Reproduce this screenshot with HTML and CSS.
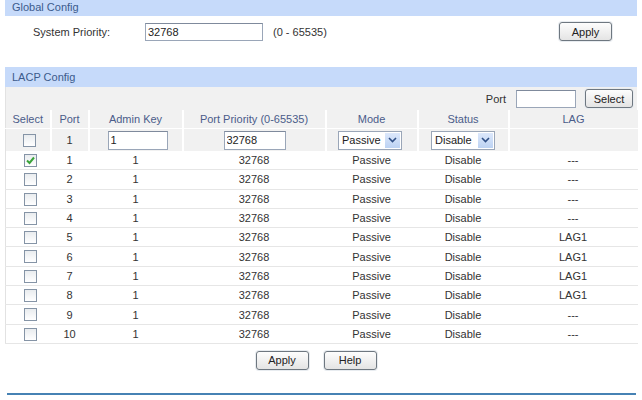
FILE: index.html
```html
<!DOCTYPE html>
<html>
<head>
<meta charset="utf-8">
<link rel="stylesheet" href="styles.css">
</head>
<body>
<div class="page">
  <div class="section-head head-global">Global Config</div>
  <div class="global-row">
    <span class="gl-label">System Priority:</span>
    <input class="txt gl-input" type="text" value="32768">
    <span class="gl-range">(0 - 65535)</span>
    <span class="spacer"></span>
    <button class="btn btn-global">Apply</button>
  </div>

  <div class="section-head head-lacp">LACP Config</div>
  <div class="port-bar">
    <span class="port-label">Port</span>
    <input class="txt port-input" type="text" value="">
    <button class="btn btn-select">Select</button>
  </div>
  <table class="grid">
    <colgroup>
      <col class="c-sel"><col class="c-port"><col class="c-key"><col class="c-pri"><col class="c-mode"><col class="c-status"><col class="c-lag">
    </colgroup>
    <thead>
      <tr class="hdr">
        <th>Select</th><th>Port</th><th>Admin Key</th><th>Port Priority (0-65535)</th><th>Mode</th><th>Status</th><th>LAG</th>
      </tr>
      <tr class="edit">
        <td class="cb-cell"><span class="cb"></span></td>
        <td>1</td>
        <td><input class="txt key-input" type="text" value="1"></td>
        <td><input class="txt pri-input" type="text" value="32768"></td>
        <td><span class="sel sel-mode"><span class="sel-text">Passive</span><span class="sel-arrow"><svg width="9" height="6" viewBox="0 0 9 6"><path d="M1 1 L4.5 4.5 L8 1" fill="none" stroke="#2f4f86" stroke-width="1.6"/></svg></span></span></td>
        <td><span class="sel sel-status"><span class="sel-text">Disable</span><span class="sel-arrow"><svg width="9" height="6" viewBox="0 0 9 6"><path d="M1 1 L4.5 4.5 L8 1" fill="none" stroke="#2f4f86" stroke-width="1.6"/></svg></span></span></td>
        <td></td>
      </tr>
    </thead>
    <tbody>
      <tr><td class="cb-cell"><span class="cb checked"><svg width="11" height="11" viewBox="0 0 11 11"><path d="M2 5.5 L4.5 8 L9 2.5" fill="none" stroke="#3aa33a" stroke-width="2"/></svg></span></td><td>1</td><td>1</td><td>32768</td><td>Passive</td><td>Disable</td><td>---</td></tr>
      <tr><td class="cb-cell"><span class="cb"></span></td><td>2</td><td>1</td><td>32768</td><td>Passive</td><td>Disable</td><td>---</td></tr>
      <tr><td class="cb-cell"><span class="cb"></span></td><td>3</td><td>1</td><td>32768</td><td>Passive</td><td>Disable</td><td>---</td></tr>
      <tr><td class="cb-cell"><span class="cb"></span></td><td>4</td><td>1</td><td>32768</td><td>Passive</td><td>Disable</td><td>---</td></tr>
      <tr><td class="cb-cell"><span class="cb"></span></td><td>5</td><td>1</td><td>32768</td><td>Passive</td><td>Disable</td><td>LAG1</td></tr>
      <tr><td class="cb-cell"><span class="cb"></span></td><td>6</td><td>1</td><td>32768</td><td>Passive</td><td>Disable</td><td>LAG1</td></tr>
      <tr><td class="cb-cell"><span class="cb"></span></td><td>7</td><td>1</td><td>32768</td><td>Passive</td><td>Disable</td><td>LAG1</td></tr>
      <tr><td class="cb-cell"><span class="cb"></span></td><td>8</td><td>1</td><td>32768</td><td>Passive</td><td>Disable</td><td>LAG1</td></tr>
      <tr><td class="cb-cell"><span class="cb"></span></td><td>9</td><td>1</td><td>32768</td><td>Passive</td><td>Disable</td><td>---</td></tr>
      <tr><td class="cb-cell"><span class="cb"></span></td><td>10</td><td>1</td><td>32768</td><td>Passive</td><td>Disable</td><td>---</td></tr>
    </tbody>
  </table>
  <div class="actions">
    <button class="btn btn-act">Apply</button>
    <button class="btn btn-act">Help</button>
  </div>
  <div class="bottom-line"></div>
</div>
</body>
</html>
```

FILE: styles.css
```css
html, body {
  margin: 0;
  padding: 0;
  background: #ffffff;
}
body {
  font-family: "Liberation Sans", Arial, sans-serif;
  font-size: 11px;
  color: #333333;
}
.page {
  width: 632px;
  margin-left: 5px;
}
.section-head {
  background: #c6dafa;
  color: #3c5a8c;
  padding-left: 7px;
  font-size: 11px;
}
.head-global {
  height: 16px;
  line-height: 14px;
}
.head-lacp {
  height: 20px;
  line-height: 20px;
  margin-top: 20px;
}
.global-row {
  display: flex;
  align-items: center;
  height: 31px;
}
.gl-label {
  width: 112px;
  padding-left: 28px;
  color: #333;
}
.txt {
  font-family: "Liberation Sans", Arial, sans-serif;
  font-size: 11px;
  color: #222;
  border: 1px solid #9aa6b8;
  border-top-color: #7f8a9c;
  background: #fff;
  padding: 0 2px;
  margin: 0;
  box-sizing: border-box;
  outline: none;
}
.gl-input {
  width: 118px;
  height: 18px;
}
.gl-range {
  margin-left: 10px;
}
.spacer {
  flex: 1;
}
.btn {
  font-family: "Liberation Sans", Arial, sans-serif;
  font-size: 11px;
  color: #222;
  border: 1px solid #6e7780;
  border-radius: 3px;
  background: linear-gradient(#fdfdfd, #e4e4e4);
  padding: 0;
  margin: 0;
  box-sizing: border-box;
  height: 19px;
  box-shadow: 0 0 0 1px #e8ecf0;
}
.btn-global {
  width: 53px;
  margin-right: 25px;
}
.port-bar {
  display: flex;
  align-items: center;
  justify-content: flex-end;
  height: 23px;
  background: #f1f1f1;
  border-left: 1px solid #e2e2e2;
  padding-right: 4px;
}
.port-label {
  margin-right: 10px;
  color: #333;
}
.port-input {
  width: 60px;
  height: 18px;
  margin-right: 9px;
}
.btn-select {
  width: 48px;
  height: 19px;
}
.grid {
  width: 632px;
  border-collapse: collapse;
  table-layout: fixed;
  border-left: 1px solid #e2e2e2;
}
.c-sel { width: 45px; }
.c-port { width: 38px; }
.c-key { width: 94px; }
.c-pri { width: 143px; }
.c-mode { width: 92px; }
.c-status { width: 91px; }
.c-lag { width: 129px; }
.grid th, .grid td {
  text-align: center;
  padding: 0;
  font-size: 11px;
}
.grid td.cb-cell {
  padding-left: 4px;
}
.hdr th {
  font-weight: normal;
  color: #4b5c8a;
  background: #f1f1f1;
  height: 18px;
  border-left: 2px solid #ffffff;
  border-bottom: 1px solid #ffffff;
}
.hdr th:first-child, .edit td:first-child {
  border-left: none;
}
.edit td {
  background: #f1f1f1;
  height: 22px;
  border-left: 2px solid #ffffff;
  color: #333;
}
.grid tbody td {
  height: 18.3px;
  border-bottom: 1px solid #e6e6e6;
  background: #fff;
  color: #333;
}
.key-input {
  width: 60px;
  height: 19px;
  display: block;
  margin-left: 18px;
}
.pri-input {
  width: 62px;
  height: 19px;
  display: block;
  margin-left: 40px;
}
.cb {
  display: inline-block;
  width: 13px;
  height: 13px;
  box-sizing: border-box;
  border: 1px solid #8594a6;
  background: linear-gradient(#e9ecef, #ffffff);
  vertical-align: middle;
  position: relative;
}
.cb svg {
  position: absolute;
  left: 0;
  top: 0;
}
.sel {
  display: inline-flex;
  align-items: center;
  height: 19px;
  box-sizing: border-box;
  border: 1px solid #9aa6b8;
  background: #fff;
  vertical-align: middle;
  text-align: left;
}
.sel-mode { width: 64px; margin-right: 3px; }
.sel-status { width: 64px; }
.sel-text {
  flex: 1;
  padding-left: 3px;
  color: #222;
}
.sel-arrow {
  width: 15px;
  height: 15px;
  margin-right: 1px;
  background: linear-gradient(#dce8fb, #bcd2f3);
  display: flex;
  align-items: center;
  justify-content: center;
}
.actions {
  display: flex;
  justify-content: center;
  gap: 15px;
  margin-top: 7px;
  padding-right: 10px;
}
.btn-act {
  width: 53px;
  height: 19px;
}
.bottom-line {
  margin-top: 23px;
  margin-left: 2px;
  width: 629px;
  height: 2px;
  background: #4682b4;
}
```
